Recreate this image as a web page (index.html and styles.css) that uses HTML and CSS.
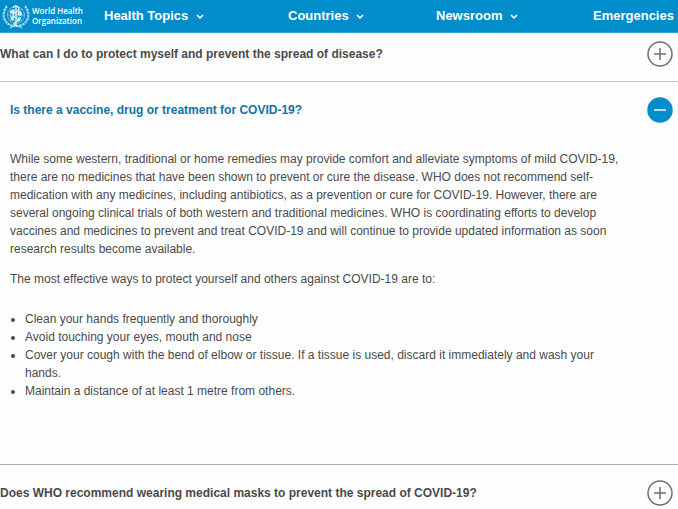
FILE: index.html
```html
<!DOCTYPE html>
<html lang="en">
<head>
    <meta charset="UTF-8">
    <meta name="viewport" content="width=device-width, initial-scale=1.0">
    <title>Q&amp;A on coronaviruses (COVID-19)</title>
    <link rel="stylesheet" href="styles.css">
</head>
<body>
    <header class="header">
        <a class="logo" href="#">
            <svg class="emblem" viewBox="0 0 28 28" aria-hidden="true">
                <g fill="none" stroke="#fff">
                    <!-- globe -->
                    <g stroke-width="0.6" opacity="0.7">
                        <circle cx="14" cy="13" r="8.5"/>
                        <circle cx="14" cy="13" r="5.5"/>
                        <circle cx="14" cy="13" r="2.5"/>
                        <path d="M5.5 13h17M8 7l12 12M20 7L8 19"/>
                    </g>
                    <!-- laurel branches -->
                    <g stroke-width="2.2" stroke-dasharray="2.6 0.6" opacity="0.65">
                        <path d="M5 4C-1 12 1 22 12 24"/>
                        <path d="M23 4c6 8 4 18-7 20"/>
                    </g>
                    <path d="M8 26l6-3 6 3" stroke-width="1" opacity="0.8"/>
                    <!-- staff and snake -->
                    <path d="M14 3v22" stroke-width="1"/>
                    <path d="M11 6c1-3 6-2 6 1s-6 3-6 6 5 3 5 5-4 2-4 4 3 1 3 3" stroke-width="1.1"/>
                </g>
                <path d="M8 9l4-2 1 3-2 2-3-1zM16 9l4 1-1 4-3-1zM8 15l3-1 1 4-2 1zM16 16l3-1-1 4-2 1z" fill="#fff" opacity="0.8"/>
            </svg>
            <span>World Health<br>Organization</span>
        </a>
        <nav class="nav">
            <a href="#">Health Topics <svg class="chevron" viewBox="0 0 8 6"><path d="M1 1l3 3 3-3"/></svg></a>
            <a href="#">Countries <svg class="chevron" viewBox="0 0 8 6"><path d="M1 1l3 3 3-3"/></svg></a>
            <a href="#">Newsroom <svg class="chevron" viewBox="0 0 8 6"><path d="M1 1l3 3 3-3"/></svg></a>
            <a href="#">Emergencies</a>
        </nav>
    </header>

    <main class="accordion">
        <section class="item">
            <button class="question" type="button" aria-expanded="false">
                <span>What can I do to protect myself and prevent the spread of disease?</span>
                <svg class="icon" viewBox="0 0 26 26"><circle cx="13" cy="13" r="12"/><path d="M7 13h12M13 7v12"/></svg>
            </button>
        </section>

        <section class="item open">
            <button class="question" type="button" aria-expanded="true">
                <span>Is there a vaccine, drug or treatment for COVID-19?</span>
                <svg class="icon" viewBox="0 0 26 26"><circle cx="13" cy="13" r="12"/><path d="M7 13h12"/></svg>
            </button>
            <div class="answer">
                <p>While some western, traditional or home remedies may provide comfort and alleviate symptoms of mild COVID-19, there are no medicines that have been shown to prevent or cure the disease. WHO does not recommend self-medication with any medicines, including antibiotics, as a prevention or cure for COVID-19. However, there are several ongoing clinical trials of both western and traditional medicines. WHO is coordinating efforts to develop vaccines and medicines to prevent and treat COVID-19 and will continue to provide updated information as soon research results become available.</p>
                <p>The most effective ways to protect yourself and others against COVID-19 are to:</p>
                <ul>
                    <li>Clean your hands frequently and thoroughly</li>
                    <li>Avoid touching your eyes, mouth and nose</li>
                    <li>Cover your cough with the bend of elbow or tissue. If a tissue is used, discard it immediately and wash your hands.</li>
                    <li>Maintain a distance of at least 1 metre from others.</li>
                </ul>
            </div>
        </section>

        <section class="item">
            <button class="question" type="button" aria-expanded="false">
                <span>Does WHO recommend wearing medical masks to prevent the spread of COVID-19?</span>
                <svg class="icon" viewBox="0 0 26 26"><circle cx="13" cy="13" r="12"/><path d="M7 13h12M13 7v12"/></svg>
            </button>
        </section>
    </main>
</body>
</html>
```

FILE: styles.css
```css
body {
    margin: 0;
    font-family: "Liberation Sans", Arial, sans-serif;
    font-size: 12px;
    line-height: 18px;
    color: #4a4a4a;
    background-color: #fefefe;
}
.header {
    display: flex;
    align-items: center;
    height: 32px;
    background-color: #008dc9;
    border-bottom: 1px solid #2fa3d6;
}
.header a {
    color: #fff;
    text-decoration: none;
}
.logo {
    display: flex;
    align-items: center;
    gap: 2px;
    width: 102px;
    padding-left: 2px;
    font-family: "Open Sans", sans-serif;
    font-size: 8px;
    font-weight: 600;
    line-height: 10px;
}
.emblem {
    width: 28px;
    height: 28px;
}
.nav {
    flex: 1;
    display: grid;
    grid-template-columns: 184fr 148fr 157fr 85fr;
    font-size: 13px;
    font-weight: bold;
    white-space: nowrap;
}
.chevron {
    width: 8px;
    height: 6px;
    margin-left: 4px;
    fill: none;
    stroke: #fff;
    stroke-width: 1.5;
}
.question {
    display: flex;
    justify-content: space-between;
    align-items: center;
    width: 100%;
    padding: 0 5px 0 0;
    border: none;
    background: none;
    font: inherit;
    font-weight: bold;
    color: inherit;
    text-align: left;
    cursor: pointer;
}
.item {
    padding: 15px 0 14px;
}
.item:first-child {
    padding-top: 8px;
}
.icon {
    width: 26px;
    height: 26px;
    fill: none;
    stroke: #6e6e6e;
    stroke-width: 1.5;
}
.open {
    padding-bottom: 64px;
    border-top: 1px solid #c8c8c8;
    border-bottom: 1px solid #aaa;
}
.open .question {
    padding-left: 10px;
    color: #1273a5;
}
.open circle {
    fill: #008dc9;
    stroke: #008dc9;
}
.open path {
    stroke: #fff;
}
.answer {
    padding: 27px 55px 0 10px;
}
.answer p {
    margin: 0 0 12px;
}
.answer ul {
    margin: 22px 0 0;
    padding-left: 15px;
}
```
